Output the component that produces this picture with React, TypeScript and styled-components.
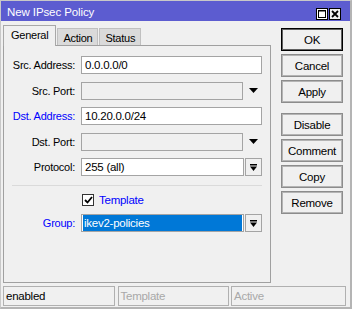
import React from "react";
import styled, { createGlobalStyle } from "styled-components";

const GlobalStyle = createGlobalStyle`
  html, body {
    margin: 0;
    padding: 0;
    background: #f0f0f0;
  }
  body {
    font-family: "Liberation Sans", Arial, sans-serif;
    font-size: 11px;
    letter-spacing: -0.25px;
    color: #000;
  }
`;

const Window = styled.div`
  width: 352px;
  height: 309px;
  box-sizing: border-box;
  border: 1px solid #c8c8c8;
  border-right: 2px solid #b4b4b4;
  border-bottom: 2px solid #b4b4b4;
  background: #f0f0f0;
  display: flex;
  flex-direction: column;
`;

const TitleBar = styled.div`
  height: 20px;
  background: #5c5cd0;
  color: #fff;
  display: flex;
  align-items: center;
  padding-left: 6px;
  padding-right: 9px;
  font-size: 11.5px;
  letter-spacing: -0.1px;
`;

const TitleText = styled.div`
  flex: 1;
  padding-top: 2px;
`;

const TitleButton = styled.div<{ $grey?: boolean }>`
  width: 12px;
  height: 12px;
  box-sizing: border-box;
  border: 1px solid #000;
  background: ${(p) => (p.$grey ? "#f0f0f0" : "#fff")};
  display: flex;
  align-items: center;
  justify-content: center;
  margin-top: 6px;
  margin-left: 1px;
`;

const Body = styled.div`
  height: 262px;
  display: flex;
  padding: 4px 0 0 2px;
  box-sizing: border-box;
`;

const LeftColumn = styled.div`
  width: 268px;
  display: flex;
  flex-direction: column;
`;

const TabRow = styled.div`
  display: flex;
  align-items: flex-end;
  height: 20px;
  position: relative;
  z-index: 1;
`;

const Tab = styled.div<{ $active?: boolean }>`
  box-sizing: border-box;
  height: ${(p) => (p.$active ? "21px" : "17px")};
  margin-bottom: ${(p) => (p.$active ? "-1px" : "0")};
  padding: ${(p) => (p.$active ? "2px 7px 0 7px" : "2px 5px 0 5px")};
  background: ${(p) => (p.$active ? "#f0f0f0" : "#dadada")};
  border: 1px solid ${(p) => (p.$active ? "#a8a8a8" : "#c0c0c0")};
  border-bottom: none;
  margin-right: 1px;
  font-size: 11px;
  line-height: 15px;
`;

const Panel = styled.div`
  flex: 1;
  border: 1px solid #a0a0a0;
  background: #f0f0f0;
  padding-top: 10px;
  box-sizing: border-box;
`;

const FormGrid = styled.div`
  display: grid;
  grid-template-columns: 71px 181px;
  column-gap: 6px;
  row-gap: 7.5px;
  align-items: center;
`;

const Label = styled.div<{ $blue?: boolean }>`
  text-align: right;
  color: ${(p) => (p.$blue ? "#0000ff" : "#000")};
  line-height: 18px;
`;

const FieldRow = styled.div`
  display: flex;
  align-items: stretch;
  height: 18px;
`;

const Input = styled.div<{ $disabled?: boolean }>`
  flex: 1;
  box-sizing: border-box;
  height: 18px;
  border: 1px solid #a4a4a4;
  background: ${(p) => (p.$disabled ? "#f0f0f0" : "#fff")};
  padding-left: 3px;
  line-height: 16px;
  font-size: 11.5px;
  white-space: nowrap;
  overflow: hidden;
`;

const ArrowSpot = styled.div`
  width: 18px;
  display: flex;
  align-items: center;
  justify-content: center;
  padding-left: 1px;
`;

const DropButton = styled.div`
  width: 17px;
  box-sizing: border-box;
  margin-left: 1px;
  border: 1px solid #a4a4a4;
  background: #f0f0f0;
  display: flex;
  align-items: center;
  justify-content: center;
`;

const Selected = styled.div`
  background: #0078d7;
  color: #fff;
  height: 16px;
  margin-right: 1px;
  margin-left: -2px;
  padding-left: 1px;
  line-height: 16px;
`;

const Separator = styled.div`
  height: 1px;
  background: #dadada;
  margin: 9px 8px 0 8px;
`;

const CheckRow = styled.div`
  display: flex;
  align-items: center;
  margin: 8px 0 0 78px;
  height: 12px;
  gap: 5px;
  color: #0000ff;
  font-size: 11.5px;
`;

const CheckBox = styled.div`
  width: 12px;
  height: 12px;
  box-sizing: border-box;
  border: 1px solid #333;
  background: #fff;
  display: flex;
  align-items: center;
  justify-content: center;
`;

const GroupGrid = styled(FormGrid)`
  margin-top: 8px;
`;

const ButtonColumn = styled.div`
  margin-left: 10px;
  padding-top: 3px;
  display: flex;
  flex-direction: column;
  gap: 3px;
`;

const Button = styled.div<{ $default?: boolean; $spaced?: boolean }>`
  width: 62px;
  height: 23px;
  box-sizing: border-box;
  border: 1px solid ${(p) => (p.$default ? "#000" : "#8c8c8c")};
  box-shadow: inset 0 0 0 1px ${(p) => (p.$default ? "#606060" : "#b4b4b4")};
  background: #f0f0f0;
  display: flex;
  align-items: center;
  justify-content: center;
  margin-top: ${(p) => (p.$spaced ? "7px" : "0")};
  font-size: 11.5px;
`;

const StatusBar = styled.div`
  display: grid;
  grid-template-columns: 112px 111px 115px;
  column-gap: 2.5px;
  padding-left: 2px;
  margin-top: 3px;
  height: 20px;
`;

const StatusCell = styled.div<{ $muted?: boolean }>`
  box-sizing: border-box;
  border: 1px solid #b0b0b0;
  padding-left: 2px;
  line-height: 18px;
  font-size: 11.5px;
  color: ${(p) => (p.$muted ? "#a8a8a8" : "#000")};
`;

const DownTriangle = () => (
  <svg width="9" height="5" viewBox="0 0 9 5">
    <polygon points="0,0 9,0 4.5,5" fill="#000" />
  </svg>
);

const BarTriangle = () => (
  <svg width="7" height="7" viewBox="0 0 7 7">
    <rect x="0" y="0" width="7" height="1.5" fill="#000" />
    <polygon points="0,2.5 7,2.5 3.5,7" fill="#000" />
  </svg>
);

const MaxIcon = () => (
  <svg width="8" height="8" viewBox="0 0 8 8">
    <rect x="0.5" y="0.5" width="7" height="7" fill="none" stroke="#000" />
    <rect x="0" y="0" width="8" height="1.5" fill="#000" />
  </svg>
);

const CloseIcon = () => (
  <svg width="8" height="8" viewBox="0 0 8 8">
    <path d="M1 1 L7 7 M7 1 L1 7" stroke="#000" strokeWidth="1.8" />
  </svg>
);

const CheckMark = () => (
  <svg width="9" height="8" viewBox="0 0 9 8">
    <path d="M1 4 L3.5 6.5 L8 1" fill="none" stroke="#000" strokeWidth="1.8" />
  </svg>
);

const App: React.FC = () => {
  return (
    <>
      <GlobalStyle />
      <Window>
        <TitleBar>
          <TitleText>New IPsec Policy</TitleText>
          <TitleButton>
            <MaxIcon />
          </TitleButton>
          <TitleButton $grey>
            <CloseIcon />
          </TitleButton>
        </TitleBar>

        <Body>
          <LeftColumn>
            <TabRow>
              <Tab $active>General</Tab>
              <Tab>Action</Tab>
              <Tab>Status</Tab>
            </TabRow>
            <Panel>
              <FormGrid>
                <Label>Src. Address:</Label>
                <FieldRow>
                  <Input>0.0.0.0/0</Input>
                </FieldRow>

                <Label>Src. Port:</Label>
                <FieldRow>
                  <Input $disabled />
                  <ArrowSpot>
                    <DownTriangle />
                  </ArrowSpot>
                </FieldRow>

                <Label $blue>Dst. Address:</Label>
                <FieldRow>
                  <Input>10.20.0.0/24</Input>
                </FieldRow>

                <Label>Dst. Port:</Label>
                <FieldRow>
                  <Input $disabled />
                  <ArrowSpot>
                    <DownTriangle />
                  </ArrowSpot>
                </FieldRow>

                <Label>Protocol:</Label>
                <FieldRow>
                  <Input>255 (all)</Input>
                  <DropButton>
                    <BarTriangle />
                  </DropButton>
                </FieldRow>
              </FormGrid>

              <Separator />

              <CheckRow>
                <CheckBox>
                  <CheckMark />
                </CheckBox>
                Template
              </CheckRow>

              <GroupGrid>
                <Label $blue>Group:</Label>
                <FieldRow>
                  <Input>
                    <Selected>ikev2-policies</Selected>
                  </Input>
                  <DropButton>
                    <BarTriangle />
                  </DropButton>
                </FieldRow>
              </GroupGrid>
            </Panel>
          </LeftColumn>

          <ButtonColumn>
            <Button $default>OK</Button>
            <Button>Cancel</Button>
            <Button>Apply</Button>
            <Button $spaced>Disable</Button>
            <Button>Comment</Button>
            <Button>Copy</Button>
            <Button>Remove</Button>
          </ButtonColumn>
        </Body>

        <StatusBar>
          <StatusCell>enabled</StatusCell>
          <StatusCell $muted>Template</StatusCell>
          <StatusCell $muted>Active</StatusCell>
        </StatusBar>
      </Window>
    </>
  );
};

export default App;
